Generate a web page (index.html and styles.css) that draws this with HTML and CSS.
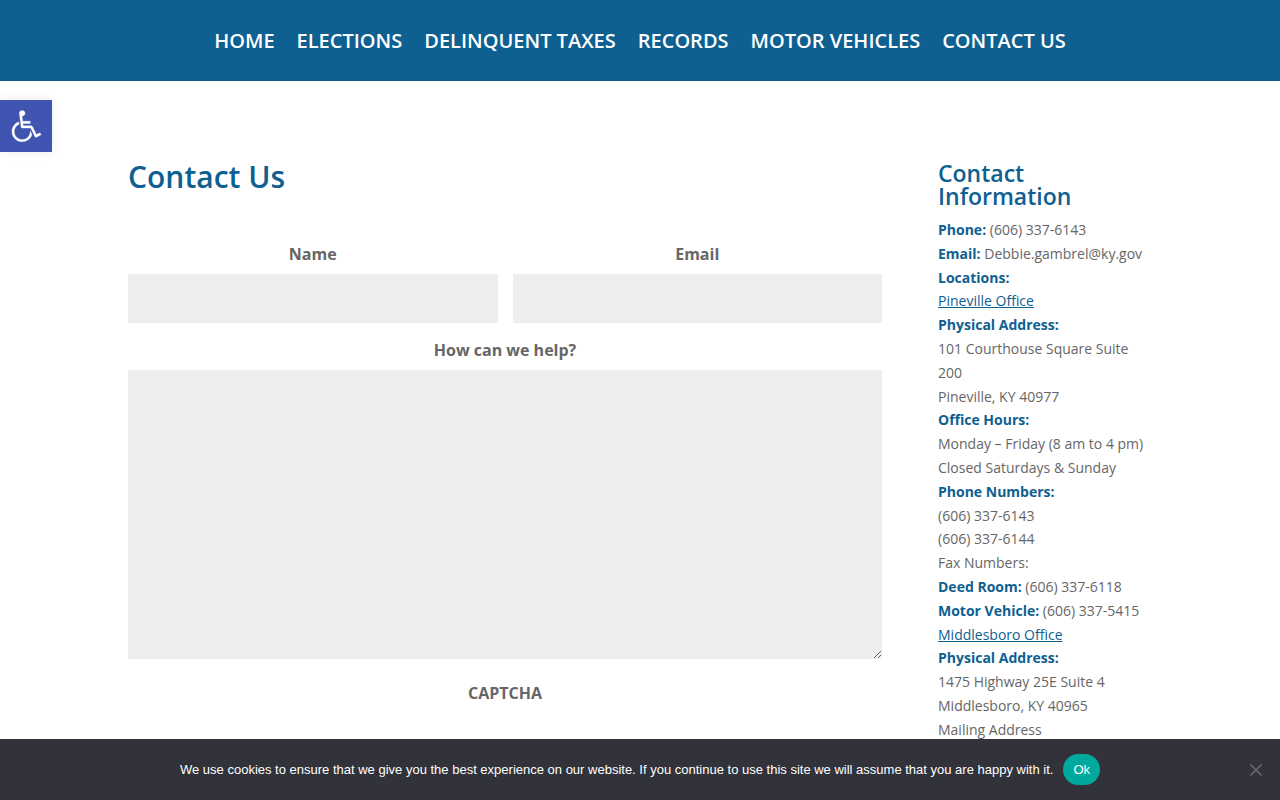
FILE: index.html
```html
<!DOCTYPE html>
<html lang="en-US">
<head>
  <meta charset="UTF-8" />
  <meta name="viewport" content="width=device-width, initial-scale=1" />
  <title>Contact Us</title>
  <link rel="stylesheet" href="styles.css">
</head>
<body>
  <header class="main-header">
    <nav class="main-nav">
      <a href="#">HOME</a>
      <a href="#">ELECTIONS</a>
      <a href="#">DELINQUENT TAXES</a>
      <a href="#">RECORDS</a>
      <a href="#">MOTOR VEHICLES</a>
      <a href="#">CONTACT US</a>
    </nav>
  </header>

  <a class="accessibility" href="#" aria-label="Open toolbar">
    <svg viewBox="0 0 100 100" width="32" height="32" fill="currentColor" stroke="currentColor" stroke-width="1">
      <path d="M60.4 78.9c-2.2 4.1-5.3 7.4-9.2 9.8-4 2.4-8.3 3.6-13 3.6-6.9 0-12.8-2.4-17.7-7.3-4.9-4.9-7.3-10.8-7.3-17.7 0-5 1.4-9.5 4.1-13.7 2.7-4.2 6.4-7.2 10.9-9.2l-.9-7.3c-6.3 2.3-11.4 6.2-15.3 11.8C7.9 54.4 6 60.6 6 67.3c0 5.8 1.4 11.2 4.3 16.1s6.8 8.8 11.7 11.7c4.9 2.9 10.3 4.3 16.1 4.3 7 0 13.3-2.1 18.9-6.2 5.7-4.1 9.6-9.5 11.7-16.2l-5.7-11.4C63.5 70.4 62.5 74.8 60.4 78.9z"/>
      <path d="M93.8 71.3l-11.1 5.5L70 51.4c-.6-1.3-1.7-2-3.2-2H41.3l-.9-7.2h22.7v-7.2H39.6L37.5 19c2.5.3 4.8-.5 6.7-2.3 1.9-1.8 2.9-4 2.9-6.6 0-2.5-.9-4.6-2.6-6.3-1.8-1.8-3.9-2.6-6.3-2.6-2 0-3.8.6-5.4 1.8-1.6 1.2-2.7 2.7-3.2 4.6-.3 1-.4 1.8-.3 2.3l5.4 43.5c.1.9.5 1.6 1.2 2.3.7.6 1.5.9 2.4.9h26.4l13.4 26.7c.6 1.3 1.7 2 3.2 2 .6 0 1.1-.1 1.6-.4L97 77.7 93.8 71.3z"/>
    </svg>
  </a>

  <main class="container">
    <section class="content">
      <h1>Contact Us</h1>
      <form class="contact-form">
        <p class="field half">
          <label for="name">Name</label>
          <input type="text" id="name" name="name">
        </p>
        <p class="field half">
          <label for="email">Email</label>
          <input type="email" id="email" name="email">
        </p>
        <p class="field">
          <label for="message">How can we help?</label>
          <textarea id="message" name="message"></textarea>
        </p>
        <p class="captcha">CAPTCHA</p>
      </form>
    </section>

    <aside class="sidebar">
      <h2>Contact Information</h2>
      <p>
        <strong>Phone:</strong> (606) 337-6143<br>
        <strong>Email:</strong> Debbie.gambrel@ky.gov<br>
        <strong>Locations:</strong><br>
        <a href="#">Pineville Office</a><br>
        <strong>Physical Address:</strong><br>
        101 Courthouse Square Suite 200<br>
        Pineville, KY 40977<br>
        <strong>Office Hours:</strong><br>
        Monday – Friday (8 am to 4 pm)<br>
        Closed Saturdays &amp; Sunday<br>
        <strong>Phone Numbers:</strong><br>
        (606) 337-6143<br>
        (606) 337-6144<br>
        Fax Numbers:<br>
        <strong>Deed Room:</strong> (606) 337-6118<br>
        <strong>Motor Vehicle:</strong> (606) 337-5415<br>
        <a href="#">Middlesboro Office</a><br>
        <strong>Physical Address:</strong><br>
        1475 Highway 25E Suite 4<br>
        Middlesboro, KY 40965<br>
        Mailing Address
      </p>
    </aside>
  </main>

  <div class="cookie-notice" role="dialog" aria-label="Cookie Notice">
    <span>We use cookies to ensure that we give you the best experience on our website. If you continue to use this site we will assume that you are happy with it.</span>
    <button class="cookie-ok" type="button">Ok</button>
    <button class="cookie-close" type="button" aria-label="Close">
      <svg viewBox="0 0 12 12" width="12" height="12" stroke="currentColor" stroke-width="1.5">
        <path d="M.5.5l11 11M11.5.5l-11 11"/>
      </svg>
    </button>
  </div>
</body>
</html>
```
FILE: styles.css
```css
* {
  box-sizing: border-box;
}

body {
  margin: 0;
  font-family: "Open Sans", Arial, sans-serif;
  font-size: 14px;
  line-height: 1.7;
  color: #666;
  background-color: #fff;
}

.main-header {
  background-color: #0e6091;
  padding: 24px 0;
}

.main-nav {
  display: flex;
  flex-wrap: wrap;
  justify-content: center;
  gap: 0 22px;
}

.main-nav a {
  color: #fff;
  font-size: 20px;
  font-weight: 600;
  line-height: 33px;
  text-decoration: none;
}

.accessibility {
  position: fixed;
  top: 100px;
  left: 0;
  display: flex;
  align-items: center;
  justify-content: center;
  width: 52px;
  height: 52px;
  color: #fff;
  background-color: #4054b2;
  box-shadow: 0 0 10px rgba(0, 0, 0, 0.08);
}

.container {
  display: flex;
  width: 80%;
  max-width: 1080px;
  margin: 0 auto;
  padding: 81px 0;
}

.content {
  flex: 1;
  padding-right: 56px;
}

h1,
h2 {
  margin: 0;
  font-weight: 600;
  color: #0e6091;
}

h1 {
  font-size: 30px;
  line-height: 30px;
}

.contact-form {
  display: grid;
  grid-template-columns: 1fr 1fr;
  gap: 15px;
  margin-top: 50px;
}

.field {
  grid-column: span 2;
  margin: 0;
}

.half {
  grid-column: span 1;
}

.field label,
.captcha {
  display: block;
  font-size: 16px;
  font-weight: 700;
  line-height: 24px;
  text-align: center;
}

.field label {
  margin-bottom: 8px;
}

.field input,
.field textarea {
  display: block;
  width: 100%;
  padding: 16px;
  border: 0;
  font: inherit;
  color: #999;
  background-color: #eee;
}

.field input {
  height: 49px;
}

.field textarea {
  height: 289px;
  resize: vertical;
}

.captcha {
  grid-column: span 2;
  margin: 7px 0 0;
}

.sidebar {
  width: 214px;
}

.sidebar h2 {
  padding-bottom: 10px;
  font-size: 23px;
  line-height: 23px;
}

.sidebar p {
  margin: 0;
}

.sidebar strong,
.sidebar a {
  color: #0e6091;
}

.cookie-notice {
  position: fixed;
  right: 0;
  bottom: 0;
  left: 0;
  display: flex;
  align-items: center;
  justify-content: center;
  gap: 10px;
  padding: 15px 30px;
  font-family: "Liberation Sans", Arial, sans-serif;
  font-size: 13px;
  line-height: 20px;
  color: #fff;
  background-color: #32323a;
}

.cookie-ok {
  padding: 8px 10px;
  border: 0;
  border-radius: 16px;
  font: inherit;
  line-height: 15px;
  color: #fff;
  background-color: #00a99d;
  cursor: pointer;
}

.cookie-close {
  position: absolute;
  right: 18px;
  display: flex;
  padding: 0;
  border: 0;
  color: #6a6a70;
  background: none;
  cursor: pointer;
}
```
